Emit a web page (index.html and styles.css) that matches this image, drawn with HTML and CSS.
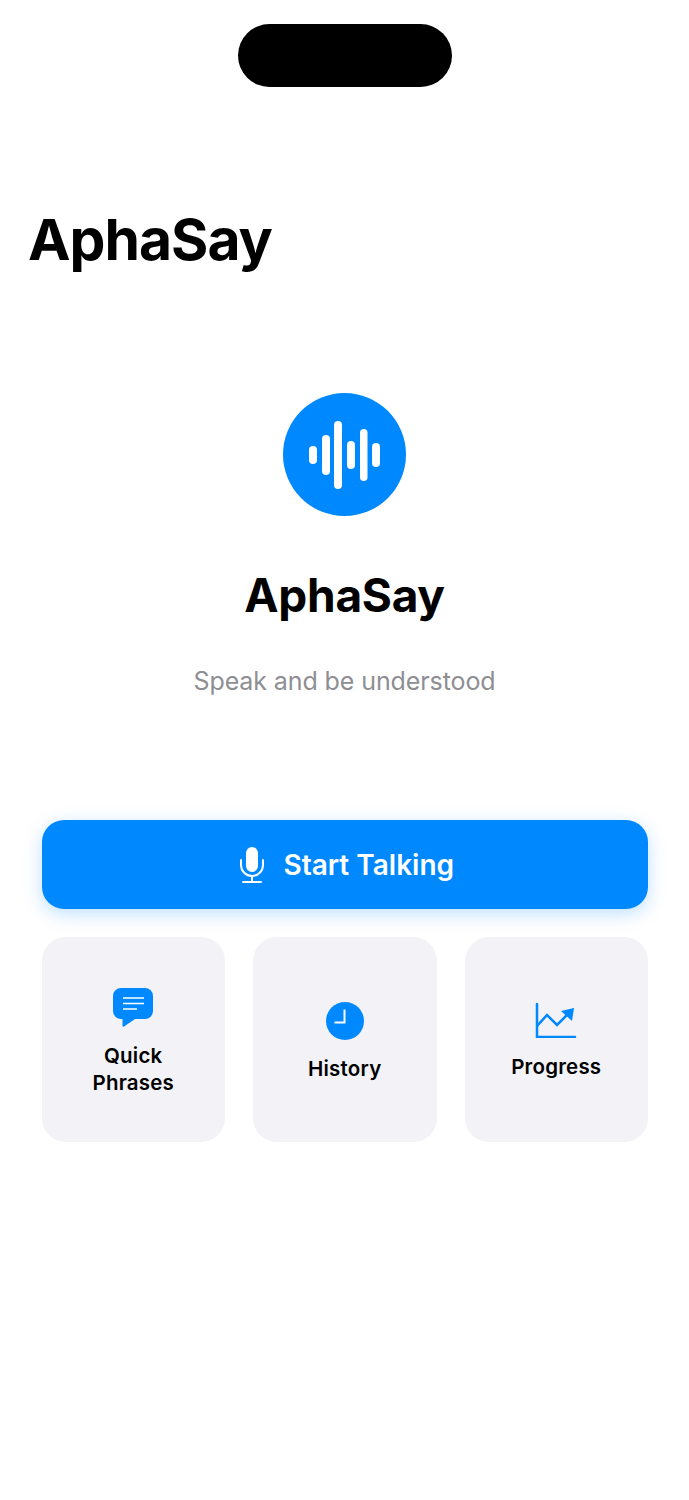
FILE: index.html
```html
<!DOCTYPE html>
<html lang="en">
<head>
    <meta charset="UTF-8">
    <meta name="viewport" content="width=device-width, initial-scale=1.0">
    <title>AphaSay</title>
    <link rel="stylesheet" href="styles.css">
</head>
<body>
    <div class="screen">
        <div class="island"></div>

        <h1 class="page-title">AphaSay</h1>

        <div class="hero">
            <div class="logo">
                <svg width="71" height="68" viewBox="0 0 71 68">
                    <g fill="#fff">
                        <rect x="0" y="25" width="8" height="18" rx="4"/>
                        <rect x="13" y="14" width="8" height="40" rx="4"/>
                        <rect x="25" y="0" width="8" height="68" rx="4"/>
                        <rect x="38" y="20" width="8" height="28" rx="4"/>
                        <rect x="51" y="8" width="7.5" height="52" rx="3.75"/>
                        <rect x="63" y="22" width="8" height="24" rx="4"/>
                    </g>
                </svg>
            </div>
            <h2 class="app-name">AphaSay</h2>
            <p class="tagline">Speak and be understood</p>
        </div>

        <div class="actions">
            <button class="start-btn">
                <svg width="24" height="36" viewBox="0 0 24 36">
                    <rect x="6" y="0" width="12" height="25" rx="6" fill="#fff"/>
                    <path d="M1 13v5a11 11 0 0 0 22 0v-5M12 29v6M3 35h18" fill="none" stroke="#fff" stroke-width="2" stroke-linecap="round"/>
                </svg>
                <span>Start Talking</span>
            </button>

            <div class="tiles">
                <div class="tile">
                    <svg width="40" height="39" viewBox="0 0 40 39">
                        <path d="M8 0h24a8 8 0 0 1 8 8v15a8 8 0 0 1-8 8H22l-11 7.500a1 1 0 0 1-1.500-.8V31H8a8 8 0 0 1-8-8V8a8 8 0 0 1 8-8z" fill="#0088ff"/>
                        <path d="M10 10h21M10 15.500h21M10 21h14" stroke="#fff" stroke-width="1.700" fill="none"/>
                    </svg>
                    <span class="tile-label">Quick<br>Phrases</span>
                </div>
                <div class="tile">
                    <svg width="38" height="38" viewBox="0 0 38 38">
                        <circle cx="19" cy="19" r="19" fill="#0088ff"/>
                        <path d="M18.500 7.500v13h-10" fill="none" stroke="#fff" stroke-width="2"/>
                    </svg>
                    <span class="tile-label">History</span>
                </div>
                <div class="tile">
                    <svg width="42" height="35" viewBox="0 0 42 35">
                        <path d="M2 1v33h38" fill="none" stroke="#0088ff" stroke-width="2.500" stroke-linecap="round"/>
                        <path d="M2 23l10-11 10 10 11-11" fill="none" stroke="#0088ff" stroke-width="2.500"/>
                        <path d="M26 8l13-3-2 13z" fill="#0088ff"/>
                    </svg>
                    <span class="tile-label">Progress</span>
                </div>
            </div>
        </div>
    </div>
</body>
</html>
```

FILE: styles.css
```css
* {
    box-sizing: border-box;
}

body {
    margin: 0;
    background: #ffffff;
    font-family: 'Inter', 'Liberation Sans', sans-serif;
    color: #000000;
}

.screen {
    height: 1500px;
    overflow: hidden;
    padding-top: 24px;
}

.island {
    width: 214px;
    height: 63px;
    margin: 0 auto;
    background: #000000;
    border-radius: 32px;
}

.page-title {
    margin: 117px 0 0 28px;
    font-size: 57px;
    line-height: 72px;
    font-weight: 700;
    letter-spacing: -1px;
}

.hero {
    display: flex;
    flex-direction: column;
    align-items: center;
    margin-top: 117px;
}

.logo {
    width: 123px;
    height: 123px;
    border-radius: 50%;
    background: #0088ff;
    display: flex;
    align-items: center;
    justify-content: center;
}

.app-name {
    margin: 51px 0 0;
    font-size: 46px;
    line-height: 56px;
    font-weight: 700;
    letter-spacing: -0.3px;
}

.tagline {
    margin: 42px 0 0;
    font-size: 25px;
    line-height: 32px;
    letter-spacing: -0.1px;
    color: #8e8e93;
}

.actions {
    display: flex;
    flex-direction: column;
    gap: 28px;
    margin: 123px 41px 0 41.5px;
}

.start-btn {
    height: 89px;
    padding-left: 11px;
    border: none;
    border-radius: 22px;
    background: #0088ff;
    color: #ffffff;
    font: 600 28px 'Inter', 'Liberation Sans', sans-serif;
    display: flex;
    align-items: center;
    justify-content: center;
    gap: 19px;
    box-shadow: 0 5px 18px rgba(0, 136, 255, 0.25);
}

.tiles {
    display: grid;
    grid-template-columns: repeat(3, 1fr);
    gap: 28px;
}

.tile {
    height: 205px;
    padding-top: 4px;
    border-radius: 24px;
    background: #f2f2f7;
    display: flex;
    flex-direction: column;
    align-items: center;
    justify-content: center;
    gap: 15px;
}

.tile-label {
    font-size: 20.5px;
    line-height: 27px;
    font-weight: 600;
    letter-spacing: 0.2px;
    text-align: center;
}
```
